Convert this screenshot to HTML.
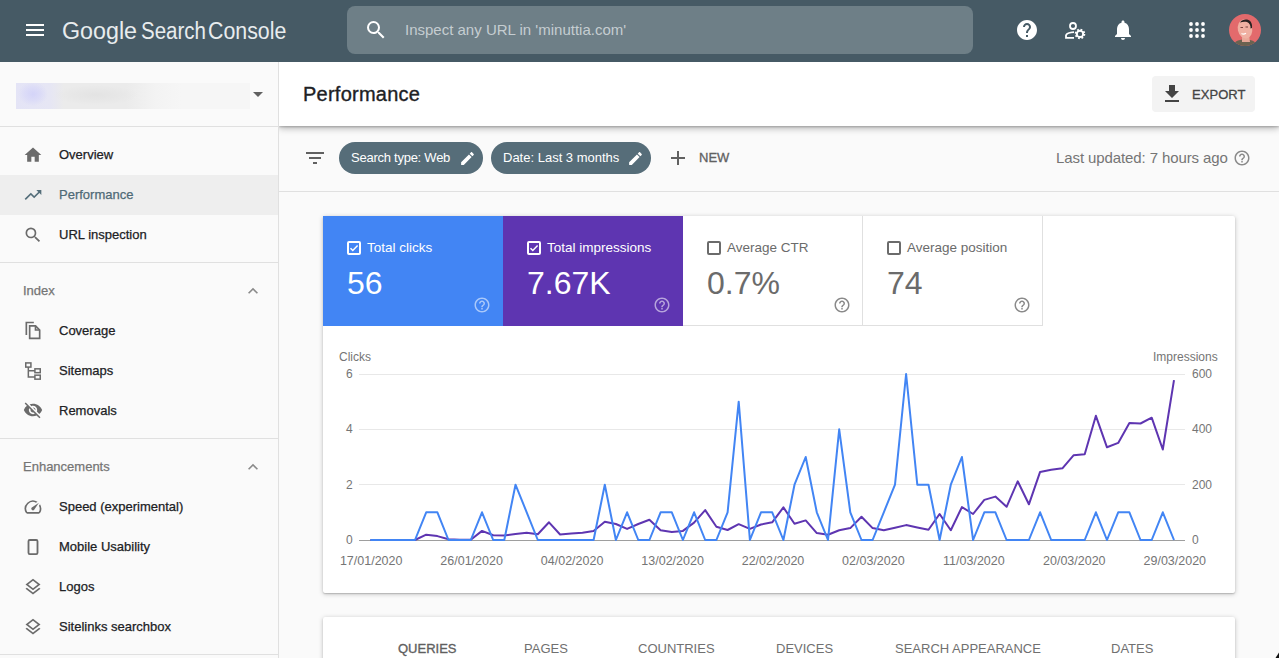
<!DOCTYPE html>
<html><head><meta charset="utf-8">
<style>
*{box-sizing:border-box;margin:0;padding:0}
html,body{width:1279px;height:658px;overflow:hidden;background:#fafafa;font-family:"Liberation Sans",sans-serif;position:relative}
.a{position:absolute;white-space:nowrap}
#hdr{position:absolute;left:0;top:0;width:1279px;height:62px;background:#465a65}
#side{position:absolute;left:0;top:62px;width:279px;height:596px;background:#fafafa;border-right:1px solid #e0e0e0}
.hr{position:absolute;left:0;width:278px;height:1px;background:#e0e0e0}
.nav{position:absolute;left:59px;font-size:13px;color:#202124;-webkit-text-stroke:0.25px #202124;line-height:16px}
.sec{position:absolute;left:23px;font-size:13px;color:#757575;-webkit-text-stroke:0.25px #757575;line-height:16px}
.ic{position:absolute}
#perf{position:absolute;left:279px;top:62px;width:1000px;height:64px;background:#fff;box-shadow:0 2px 7px rgba(0,0,0,.3),0 1px 2px rgba(0,0,0,.2)}
#fbar{position:absolute;left:279px;top:126px;width:1000px;height:66px;border-bottom:1px solid #e0e0e0;background:#fafafa}
.chip{position:absolute;top:142px;height:32px;border-radius:16px;background:#566d79;color:#fff;font-size:13px;line-height:32px}
.card{position:absolute;left:323px;width:912px;background:#fff;border-radius:2px;box-shadow:0 1px 5px rgba(0,0,0,.22),0 1px 1.5px rgba(0,0,0,.18)}
.tile{position:absolute;top:216px;width:180px;height:110px}
.tl{position:absolute;left:44px;top:24px;font-size:13.5px;line-height:16px}
.tv{position:absolute;left:24px;top:47px;font-size:32px;line-height:40px}
.cb{position:absolute;left:24px;top:25px;width:14px;height:14px;border:2px solid #fff;border-radius:2px}
.yl{position:absolute;font-size:12px;color:#757575;line-height:14px}
.tab{position:absolute;top:641px;font-size:13px;color:#707070;line-height:16px}
</style></head><body>
<div id="fbar"></div>
<div id="perf"></div>
<div id="hdr"></div>
<!-- hamburger -->
<svg class="ic" style="left:23px;top:18px" width="24" height="24" viewBox="0 0 24 24"><path fill="#fff" d="M3 18h18v-2H3v2zm0-5h18v-2H3v2zm0-7v2h18V6H3z"/></svg>
<div class="a" style="left:62px;top:16px;font-size:23.5px;line-height:30px;color:#e8ecee;transform:scaleX(0.99);transform-origin:0 0">Google</div>
<div class="a" style="left:141px;top:16px;font-size:23.5px;line-height:30px;color:#e8ecee;transform:scaleX(0.873);transform-origin:0 0">Search</div>
<div class="a" style="left:208px;top:16px;font-size:23.5px;line-height:30px;color:#e8ecee;transform:scaleX(0.908);transform-origin:0 0">Console</div>
<!-- search -->
<div class="a" style="left:347px;top:6px;width:626px;height:48px;border-radius:8px;background:#6e7f87"></div>
<svg class="ic" style="left:364px;top:18px" width="24" height="24" viewBox="0 0 24 24"><path fill="#fff" d="M15.5 14h-.79l-.28-.27A6.47 6.47 0 0 0 16 9.5 6.5 6.5 0 1 0 9.5 16c1.61 0 3.09-.59 4.23-1.57l.27.28v.79l5 4.99L20.49 19l-4.99-5zm-6 0C7.01 14 5 11.99 5 9.5S7.01 5 9.5 5 14 7.01 14 9.5 11.99 14 9.5 14z"/></svg>
<div class="a" style="left:405px;top:21px;font-size:15px;line-height:18px;color:#c5cdd1">Inspect any URL in 'minuttia.com'</div>
<!-- header icons -->
<svg class="ic" style="left:1015px;top:18px" width="24" height="24" viewBox="0 0 24 24"><path fill="#fff" d="M12 2C6.48 2 2 6.48 2 12s4.48 10 10 10 10-4.48 10-10S17.52 2 12 2zm1 17h-2v-2h2v2zm2.07-7.75l-.9.92C13.45 12.9 13 13.5 13 15h-2v-.5c0-1.1.45-2.1 1.17-2.83l1.24-1.26c.37-.36.59-.86.59-1.41 0-1.1-.9-2-2-2s-2 .9-2 2H8c0-2.21 1.79-4 4-4s4 1.79 4 4c0 .88-.36 1.68-.93 2.25z"/></svg>
<svg class="ic" style="left:1063px;top:18px" width="24" height="24" viewBox="0 0 24 24"><g fill="none" stroke="#fff" stroke-width="1.8"><circle cx="10" cy="8" r="3"/><path d="M11 14.1C7 14.3 3.5 15.8 3 17.3V19.8H11"/></g><g transform="translate(17,15.9)" fill="none" stroke="#fff"><circle r="3.2" stroke-width="2"/><circle r="4.4" stroke-width="1.8" stroke-dasharray="1.75 1.705"/></g></svg>
<svg class="ic" style="left:1111px;top:18px" width="24" height="24" viewBox="0 0 24 24"><path fill="#fff" d="M12 22c1.1 0 2-.9 2-2h-4c0 1.1.89 2 2 2zm6-6v-5c0-3.07-1.64-5.64-4.5-6.32V4c0-.83-.67-1.5-1.5-1.5s-1.5.67-1.5 1.5v.68C7.63 5.36 6 7.92 6 11v5l-2 2v1h16v-1l-2-2z"/></svg>
<svg class="ic" style="left:1185px;top:18px" width="24" height="24" viewBox="0 0 24 24"><g fill="#fff"><circle cx="6" cy="6" r="1.9"/><circle cx="12" cy="6" r="1.9"/><circle cx="18" cy="6" r="1.9"/><circle cx="6" cy="12" r="1.9"/><circle cx="12" cy="12" r="1.9"/><circle cx="18" cy="12" r="1.9"/><circle cx="6" cy="18" r="1.9"/><circle cx="12" cy="18" r="1.9"/><circle cx="18" cy="18" r="1.9"/></g></svg>
<svg class="ic" style="left:1229px;top:14px" width="32" height="32" viewBox="0 0 32 32"><defs><clipPath id="av"><circle cx="16" cy="16" r="16"/></clipPath></defs><g clip-path="url(#av)"><rect width="32" height="32" fill="#e36a6c"/><path d="M3 34c1-5 4-8.5 13-8.5s12 3.5 13 8.5z" fill="#6b6250"/><path d="M13 22l7-1 1 7h-8z" fill="#e9a898"/><ellipse cx="16" cy="15" rx="7.2" ry="9.6" transform="rotate(-12 16 15)" fill="#f0b0a2"/><path d="M11 8.5c2-3 5.5-3.5 8.5-2.5 2.5 1 4 4 3.5 8l-1.5.5c.3-3-1-5.7-3.5-6.5-2.3-.7-4.8-.2-7 .5z" fill="#2b2222"/><path d="M11.5 13.5h2.5M16.5 13h2.5" stroke="#7a4440" stroke-width="1"/><path d="M12.5 19.5c1.2.8 3 .8 4.5-.2" stroke="#fff" stroke-width="1.1" fill="none"/></g></svg>

<!-- sidebar -->
<div id="side"></div>
<div class="a" style="left:16px;top:83px;width:234px;height:26px;background:radial-gradient(ellipse 15px 12px at 17px 11px,#d4d4f8 0%,rgba(214,214,248,.6) 55%,rgba(224,224,248,0) 100%),radial-gradient(ellipse 42px 10px at 80px 12px,#e3e3e3 0%,rgba(228,228,228,.5) 60%,rgba(235,235,235,0) 100%),linear-gradient(90deg,#e4e4f6 0,#e6e6f4 34px,#ebebeb 48px,#ebebeb 110px,#f3f3f3 140px,#f6f6f6 165px,#f6f6f6 234px)"></div>
<svg class="ic" style="left:253px;top:92px" width="10" height="5" viewBox="0 0 10 5"><path d="M0 0h10L5 5z" fill="#616161"/></svg>
<div class="hr" style="top:126px"></div>
<div class="a" style="left:0;top:175px;width:278px;height:40px;background:#eeeeee"></div>
<svg class="ic" style="left:23px;top:145px" width="20" height="20" viewBox="0 0 24 24"><path fill="#6b6b6b" d="M10 20v-6h4v6h5v-8h3L12 3 2 12h3v8z"/></svg>
<div class="nav" style="top:147px">Overview</div>
<svg class="ic" style="left:23px;top:185px" width="20" height="20" viewBox="0 0 24 24"><path fill="#546e7a" d="M16 6l2.29 2.29-4.88 4.88-4-4L2 16.59 3.41 18l6-6 4 4 6.3-6.29L22 12V6z"/></svg>
<div class="nav" style="top:187px;color:#4f6a77;-webkit-text-stroke-color:#4f6a77">Performance</div>
<svg class="ic" style="left:23px;top:225px" width="20" height="20" viewBox="0 0 24 24"><path fill="#6b6b6b" d="M15.5 14h-.79l-.28-.27A6.47 6.47 0 0 0 16 9.5 6.5 6.5 0 1 0 9.5 16c1.610 0 3.09-.59 4.23-1.57l.27.28v.79l5 4.99L20.49 19l-4.99-5zm-6 0C7.01 14 5 11.990 5 9.5S7.01 5 9.5 5 14 7.01 14 9.5 11.99 14 9.5 14z"/></svg>
<div class="nav" style="top:227px">URL inspection</div>
<div class="hr" style="top:262px"></div>
<div class="sec" style="top:283px">Index</div>
<svg class="ic" style="left:243px;top:281px" width="20" height="20" viewBox="0 0 24 24"><path fill="#8a8a8a" d="M12 8l-6 6 1.41 1.41L12 10.83l4.59 4.58L18 14z"/></svg>
<svg class="ic" style="left:23px;top:320px" width="20" height="20" viewBox="0 0 24 24"><g fill="none" stroke="#6b6b6b" stroke-width="2"><path d="M4 18V3h9"/><path d="M8 7h7l5 5v10H8z"/><path d="M15 7v5h5"/></g></svg>
<div class="nav" style="top:323px">Coverage</div>
<svg class="ic" style="left:23px;top:361px" width="20" height="20" viewBox="0 0 24 24"><g fill="none" stroke="#6b6b6b" stroke-width="1.8"><rect x="3.3" y="2.3" width="6.2" height="5"/><rect x="14.3" y="9.4" width="6.4" height="4.6"/><rect x="14.3" y="17" width="6.4" height="4.8"/><path d="M6.4 7.3v12H14.3M6.4 11.7H14.3"/></g></svg>
<div class="nav" style="top:363px">Sitemaps</div>
<svg class="ic" style="left:23px;top:400px" width="20" height="20" viewBox="0 0 24 24"><path fill="#6b6b6b" d="M12 7c2.76 0 5 2.24 5 5 0 .65-.13 1.26-.36 1.83l2.92 2.92c1.51-1.26 2.7-2.89 3.43-4.75-1.73-4.39-6-7.5-11-7.5-1.4 0-2.74.25-3.98.7l2.16 2.16C10.74 7.13 11.35 7 12 7zM2 4.27l2.28 2.28.46.46A11.804 11.804 0 0 0 1 12c1.73 4.39 6 7.5 11 7.5 1.55 0 3.03-.3 4.38-.84l.42.42L19.73 22 21 20.73 3.27 3 2 4.27zM7.53 9.8l1.55 1.55c-.05.21-.08.43-.08.65 0 1.66 1.34 3 3 3 .22 0 .44-.03.65-.08l1.55 1.55c-.67.33-1.41.53-2.2.53-2.76 0-5-2.24-5-5 0-.79.2-1.53.53-2.2zm4.31-.78l3.15 3.15.02-.16c0-1.66-1.34-3-3-3l-.17.01z"/></svg>
<div class="nav" style="top:403px">Removals</div>
<div class="hr" style="top:438px"></div>
<div class="sec" style="top:459px">Enhancements</div>
<svg class="ic" style="left:243px;top:457px" width="20" height="20" viewBox="0 0 24 24"><path fill="#8a8a8a" d="M12 8l-6 6 1.41 1.41L12 10.83l4.59 4.58L18 14z"/></svg>
<svg class="ic" style="left:23px;top:497px" width="20" height="20" viewBox="0 0 24 24"><path fill="#6b6b6b" d="M20.38 8.57l-1.23 1.85a8 8 0 0 1-.22 7.58H5.07A8 8 0 0 1 15.58 6.85l1.85-1.23A10 10 0 0 0 3.35 19a2 2 0 0 0 1.72 1h13.850a2 2 0 0 0 1.74-1 10 10 0 0 0-.27-10.44zm-9.79 6.84a2 2 0 0 0 2.83 0l5.66-8.49-8.49 5.66a2 2 0 0 0 0 2.83z"/></svg>
<div class="nav" style="top:499px">Speed (experimental)</div>
<svg class="ic" style="left:23px;top:536px" width="20" height="20" viewBox="0 0 24 24"><rect x="6.6" y="4.8" width="10.8" height="16.9" rx="1.5" fill="none" stroke="#6b6b6b" stroke-width="2.2"/></svg>
<div class="nav" style="top:539px">Mobile Usability</div>
<svg class="ic" style="left:23px;top:577px" width="20" height="20" viewBox="0 0 24 24"><path fill="#6b6b6b" d="M11.99 18.54l-7.37-5.73L3 14.07l9 7 9-7-1.63-1.27-7.38 5.74zM12 16l7.36-5.73L21 9l-9-7-9 7 1.63 1.27L12 16zm0-11.47L17.74 9 12 13.47 6.26 9 12 4.53z"/></svg>
<div class="nav" style="top:579px">Logos</div>
<svg class="ic" style="left:23px;top:617px" width="20" height="20" viewBox="0 0 24 24"><path fill="#6b6b6b" d="M11.99 18.54l-7.37-5.73L3 14.07l9 7 9-7-1.63-1.27-7.38 5.74zM12 16l7.36-5.73L21 9l-9-7-9 7 1.63 1.27L12 16zm0-11.47L17.74 9 12 13.47 6.26 9 12 4.53z"/></svg>
<div class="nav" style="top:619px">Sitelinks searchbox</div>
<div class="hr" style="top:654px"></div>

<!-- perf bar -->
<div class="a" style="left:303px;top:82px;font-size:20px;line-height:24px;color:#202124;letter-spacing:0.25px;-webkit-text-stroke:0.35px #202124">Performance</div>
<div class="a" style="left:1152px;top:76px;width:103px;height:36px;border-radius:4px;background:#f3f3f3"></div>
<svg class="ic" style="left:1160px;top:82px" width="24" height="24" viewBox="0 0 24 24"><path fill="#444" d="M19 9h-4V3H9v6H5l7 7 7-7zM5 18v2h14v-2H5z"/></svg>
<div class="a" style="left:1192px;top:87px;font-size:13px;line-height:16px;color:#444;letter-spacing:0.05px;-webkit-text-stroke:0.3px #444">EXPORT</div>

<!-- filter bar -->
<svg class="ic" style="left:303px;top:146px" width="24" height="24" viewBox="0 0 24 24"><path fill="#616161" d="M10 18h4v-2h-4v2zM3 6v2h18V6H3zm3 7h12v-2H6v2z"/></svg>
<div class="chip" style="left:339px;width:144px"><span class="a" style="left:12px;top:8px;line-height:16px;letter-spacing:-0.25px">Search type: Web</span></div>
<svg class="ic" style="left:458.5px;top:150px" width="17" height="17" viewBox="0 0 24 24"><path fill="#fff" d="M3 17.25V21h3.75L17.81 9.94l-3.75-3.75L3 17.25zM20.71 7.04c.39-.39.39-1.02 0-1.41l-2.34-2.34c-.39-.39-1.02-.39-1.41 0l-1.83 1.83 3.75 3.75 1.83-1.83z"/></svg>
<div class="chip" style="left:491px;width:160px"><span class="a" style="left:12px;top:8px;line-height:16px">Date: Last 3 months</span></div>
<svg class="ic" style="left:626.5px;top:150px" width="17" height="17" viewBox="0 0 24 24"><path fill="#fff" d="M3 17.25V21h3.75L17.81 9.94l-3.75-3.75L3 17.25zM20.71 7.04c.39-.39.39-1.02 0-1.41l-2.34-2.34c-.39-.39-1.02-.39-1.41 0l-1.83 1.83 3.75 3.75 1.83-1.83z"/></svg>
<svg class="ic" style="left:666px;top:146px" width="24" height="24" viewBox="0 0 24 24"><path fill="#616161" d="M19 13h-6v6h-2v-6H5v-2h6V5h2v6h6v2z"/></svg>
<div class="a" style="left:699px;top:150px;font-size:13px;line-height:16px;color:#616161;-webkit-text-stroke:0.3px #616161">NEW</div>
<div class="a" style="left:1056px;top:149px;font-size:15px;line-height:18px;color:#757575;letter-spacing:-0.1px">Last updated: 7 hours ago</div>
<svg class="ic" style="left:1233px;top:149px" width="18" height="18" viewBox="0 0 24 24"><path fill="#8a8a8a" d="M11 18h2v-2h-2v2zm1-16C6.48 2 2 6.48 2 12s4.48 10 10 10 10-4.48 10-10S17.52 2 12 2zm0 18c-4.41 0-8-3.59-8-8s3.59-8 8-8 8 3.59 8 8-3.59 8-8 8zm0-14c-2.21 0-4 1.790-4 4h2c0-1.1.9-2 2-2s2 .9 2 2c0 2-3 1.75-3 5h2c0-2.25 3-2.5 3-5 0-2.21-1.79-4-4-4z"/></svg>

<!-- card -->
<div class="card" style="top:216px;height:377px"></div>
<div class="tile" style="left:323px;background:#4285f4;color:#fff">
 <div class="cb"><svg style="position:absolute;left:0;top:0" width="10" height="10" viewBox="0 0 10 10"><path d="M1.5 5.2l2.3 2.3 4.8-5" fill="none" stroke="#fff" stroke-width="1.5"/></svg></div>
 <div class="tl">Total clicks</div><div class="tv">56</div>
 <svg style="position:absolute;left:150px;top:80px" width="18" height="18" viewBox="0 0 24 24"><path fill="rgba(255,255,255,.55)" d="M11 18h2v-2h-2v2zm1-16C6.48 2 2 6.48 2 12s4.48 10 10 10 10-4.48 10-10S17.52 2 12 2zm0 18c-4.41 0-8-3.59-8-8s3.59-8 8-8 8 3.59 8 8-3.59 8-8 8zm0-14c-2.21 0-4 1.79-4 4h2c0-1.1.9-2 2-2s2 .9 2 2c0 2-3 1.75-3 5h2c0-2.25 3-2.5 3-5 0-2.21-1.79-4-4-4z"/></svg>
</div>
<div class="tile" style="left:503px;background:#5e35b1;color:#fff">
 <div class="cb"><svg style="position:absolute;left:0;top:0" width="10" height="10" viewBox="0 0 10 10"><path d="M1.5 5.2l2.3 2.3 4.8-5" fill="none" stroke="#fff" stroke-width="1.5"/></svg></div>
 <div class="tl">Total impressions</div><div class="tv">7.67K</div>
 <svg style="position:absolute;left:150px;top:80px" width="18" height="18" viewBox="0 0 24 24"><path fill="rgba(255,255,255,.55)" d="M11 18h2v-2h-2v2zm1-16C6.48 2 2 6.48 2 12s4.48 10 10 10 10-4.48 10-10S17.52 2 12 2zm0 18c-4.41 0-8-3.59-8-8s3.59-8 8-8 8 3.59 8 8-3.59 8-8 8zm0-14c-2.21 0-4 1.79-4 4h2c0-1.1.9-2 2-2s2 .9 2 2c0 2-3 1.75-3 5h2c0-2.25 3-2.5 3-5 0-2.21-1.79-4-4-4z"/></svg>
</div>
<div class="tile" style="left:683px;color:#6b6b6b;border-right:1px solid #e0e0e0;border-bottom:1px solid #e0e0e0">
 <div class="cb" style="border-color:#6b6b6b"></div>
 <div class="tl">Average CTR</div><div class="tv">0.7%</div>
 <svg style="position:absolute;left:150px;top:80px" width="18" height="18" viewBox="0 0 24 24"><path fill="#8a8a8a" d="M11 18h2v-2h-2v2zm1-16C6.48 2 2 6.48 2 12s4.48 10 10 10 10-4.48 10-10S17.52 2 12 2zm0 18c-4.41 0-8-3.59-8-8s3.59-8 8-8 8 3.59 8 8-3.59 8-8 8zm0-14c-2.21 0-4 1.79-4 4h2c0-1.1.9-2 2-2s2 .9 2 2c0 2-3 1.75-3 5h2c0-2.25 3-2.5 3-5 0-2.21-1.79-4-4-4z"/></svg>
</div>
<div class="tile" style="left:863px;color:#6b6b6b;border-right:1px solid #e0e0e0;border-bottom:1px solid #e0e0e0">
 <div class="cb" style="border-color:#6b6b6b"></div>
 <div class="tl">Average position</div><div class="tv">74</div>
 <svg style="position:absolute;left:150px;top:80px" width="18" height="18" viewBox="0 0 24 24"><path fill="#8a8a8a" d="M11 18h2v-2h-2v2zm1-16C6.48 2 2 6.48 2 12s4.48 10 10 10 10-4.48 10-10S17.52 2 12 2zm0 18c-4.41 0-8-3.59-8-8s3.59-8 8-8 8 3.59 8 8-3.59 8-8 8zm0-14c-2.21 0-4 1.79-4 4h2c0-1.1.9-2 2-2s2 .9 2 2c0 2-3 1.75-3 5h2c0-2.25 3-2.5 3-5 0-2.21-1.79-4-4-4z"/></svg>
</div>
<!-- chart -->
<div class="yl" style="left:339px;top:350px">Clicks</div>
<div class="yl" style="left:1153px;top:350px">Impressions</div>
<svg class="ic" style="left:0;top:0" width="1279" height="658">
 <g stroke="#e8e8e8" stroke-width="1"><path d="M359 374.5H1185M359 429.5H1185M359 484.5H1185"/></g>
 <path d="M359 540.5H1185" stroke="#9e9e9e" stroke-width="1"/>
 <polyline fill="none" stroke="#5e35b1" stroke-width="2" stroke-linejoin="round" points="370.4,540.0 381.6,540.0 392.7,540.0 403.9,540.0 415.0,540.0 426.2,534.7 437.4,536.1 448.5,539.2 459.7,539.7 470.8,539.7 482.0,530.9 493.2,535.3 504.3,535.6 515.5,533.9 526.7,532.8 537.8,534.2 549.0,522.3 560.1,534.5 571.3,533.6 582.5,532.8 593.6,531.1 604.8,521.7 615.9,524.0 627.1,528.9 638.3,524.0 649.4,519.8 660.6,530.3 671.8,532.0 682.9,530.9 694.1,522.6 705.2,510.1 716.4,526.7 727.6,530.0 738.7,524.2 749.9,528.9 761.0,524.5 772.2,522.3 783.4,507.4 794.5,523.7 805.7,520.4 816.8,533.1 828.0,534.7 839.2,530.3 850.3,528.1 861.5,516.8 872.6,528.1 883.8,530.3 895.0,527.8 906.1,525.1 917.3,527.5 928.5,529.8 939.6,514.0 950.8,530.3 961.9,507.1 973.1,514.0 984.3,499.9 995.4,496.6 1006.6,506.8 1017.7,481.3 1028.9,504.3 1040.1,471.9 1051.2,469.7 1062.4,468.3 1073.5,455.3 1084.7,454.2 1095.9,415.8 1107.0,447.3 1118.2,442.9 1129.4,423.0 1140.5,423.5 1151.7,417.7 1162.8,449.5 1174.0,380.1"/>
 <polyline fill="none" stroke="#4285f4" stroke-width="2" stroke-linejoin="round" points="370.4,540.0 381.6,540.0 392.7,540.0 403.9,540.0 415.0,540.0 426.2,512.3 437.4,512.3 448.5,540.0 459.7,540.0 470.8,540.0 482.0,512.3 493.2,540.0 504.3,540.0 515.5,484.7 526.7,512.3 537.8,540.0 549.0,540.0 560.1,540.0 571.3,540.0 582.5,540.0 593.6,540.0 604.8,484.7 615.9,540.0 627.1,512.3 638.3,540.0 649.4,540.0 660.6,512.3 671.8,512.3 682.9,540.0 694.1,512.3 705.2,540.0 716.4,540.0 727.6,512.3 738.7,401.7 749.9,540.0 761.0,512.3 772.2,512.3 783.4,540.0 794.5,484.7 805.7,457.0 816.8,512.3 828.0,540.0 839.2,429.3 850.3,512.3 861.5,540.0 872.6,540.0 883.8,512.3 895.0,484.7 906.1,374.0 917.3,484.7 928.5,484.7 939.6,540.0 950.8,484.7 961.9,457.0 973.1,540.0 984.3,512.3 995.4,512.3 1006.6,540.0 1017.7,540.0 1028.9,540.0 1040.1,512.3 1051.2,540.0 1062.4,540.0 1073.5,540.0 1084.7,540.0 1095.9,512.3 1107.0,540.0 1118.2,512.3 1129.4,512.3 1140.5,540.0 1151.7,540.0 1162.8,512.3 1174.0,540.0"/>
</svg>
<div class="yl" style="left:346px;top:367px">6</div>
<div class="yl" style="left:346px;top:422px">4</div>
<div class="yl" style="left:346px;top:478px">2</div>
<div class="yl" style="left:346px;top:533px">0</div>
<div class="yl" style="left:1192px;top:367px">600</div>
<div class="yl" style="left:1192px;top:422px">400</div>
<div class="yl" style="left:1192px;top:478px">200</div>
<div class="yl" style="left:1192px;top:533px">0</div>
<div class="yl" style="left:331.2px;top:554px;width:80px;text-align:center;font-size:12.5px">17/01/2020</div>
<div class="yl" style="left:431.6px;top:554px;width:80px;text-align:center;font-size:12.5px">26/01/2020</div>
<div class="yl" style="left:532.1px;top:554px;width:80px;text-align:center;font-size:12.5px">04/02/2020</div>
<div class="yl" style="left:632.6px;top:554px;width:80px;text-align:center;font-size:12.5px">13/02/2020</div>
<div class="yl" style="left:733.0px;top:554px;width:80px;text-align:center;font-size:12.5px">22/02/2020</div>
<div class="yl" style="left:833.4px;top:554px;width:80px;text-align:center;font-size:12.5px">02/03/2020</div>
<div class="yl" style="left:933.9px;top:554px;width:80px;text-align:center;font-size:12.5px">11/03/2020</div>
<div class="yl" style="left:1034.3px;top:554px;width:80px;text-align:center;font-size:12.5px">20/03/2020</div>
<div class="yl" style="left:1134.8px;top:554px;width:80px;text-align:center;font-size:12.5px">29/03/2020</div>

<!-- card 2 -->
<div class="card" style="top:617px;height:60px"></div>
<div class="tab" style="left:398px;color:#5f5f5f;-webkit-text-stroke:0.35px #5f5f5f">QUERIES</div>
<div class="tab" style="left:524px">PAGES</div>
<div class="tab" style="left:638px">COUNTRIES</div>
<div class="tab" style="left:776px">DEVICES</div>
<div class="tab" style="left:895px">SEARCH APPEARANCE</div>
<div class="tab" style="left:1111px">DATES</div>
<svg class="ic" style="left:1274px;top:651px" width="5" height="7" viewBox="0 0 5 7"><path d="M5 1.5V7H1.5z" fill="#111"/></svg>
</body></html>
